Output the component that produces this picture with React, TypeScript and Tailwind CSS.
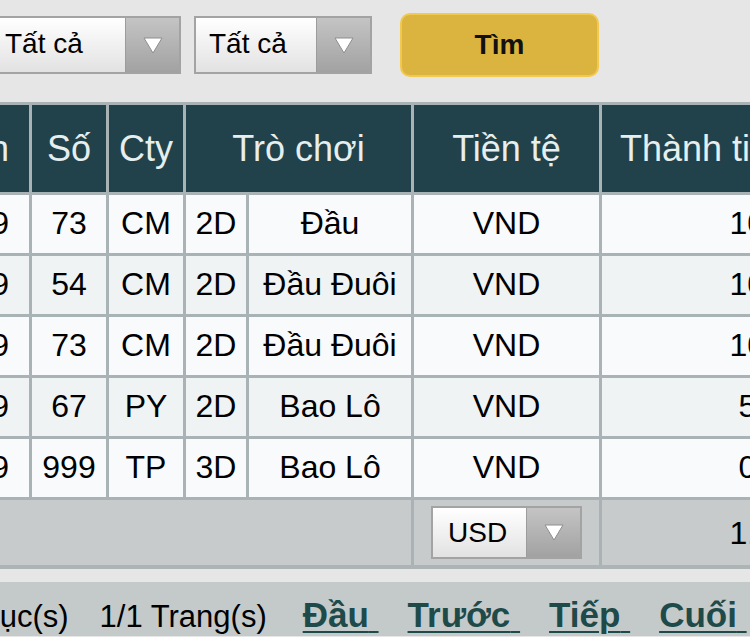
import React from "react";

const rows = [
  { date: "21/04/2019", num: "73", cty: "CM", kind: "2D", game: "Đầu", cur: "VND", amt: "10,000" },
  { date: "21/04/2019", num: "54", cty: "CM", kind: "2D", game: "Đầu Đuôi", cur: "VND", amt: "10,000" },
  { date: "21/04/2019", num: "73", cty: "CM", kind: "2D", game: "Đầu Đuôi", cur: "VND", amt: "10,000" },
  { date: "21/04/2019", num: "67", cty: "PY", kind: "2D", game: "Bao Lô", cur: "VND", amt: "5,000" },
  { date: "21/04/2019", num: "999", cty: "TP", kind: "3D", game: "Bao Lô", cur: "VND", amt: "0,000" },
];

function Arrow() {
  return (
    <svg width="20" height="17" viewBox="0 0 20 17">
      <polygon points="1,1 19,1 10,16" fill="#ffffff" stroke="#8e8e8e" strokeWidth="1" />
    </svg>
  );
}

function Select({ label, className, text }: { label: string; className: string; text: string }) {
  return (
    <div className={`flex shrink-0 border-2 border-[#a3a3a3] ${className}`}>
      <div className={`flex flex-1 items-center bg-gradient-to-b from-white to-[#e2e2e2] pl-[13px] text-black ${text}`}>
        {label}
      </div>
      <div className="flex w-[54px] items-center justify-center border-l border-[#9c9c9c] bg-gradient-to-b from-[#c4c4c4] to-[#a2a2a2]">
        <Arrow />
      </div>
    </div>
  );
}

const cell = "flex h-full shrink-0 items-center justify-center border-r-[3px] border-[#a9b2b4]";

export default function App() {
  return (
    <div className="h-[637px] w-[750px] overflow-hidden bg-[#e6e6e6] font-['Liberation_Sans',Arial,sans-serif]">
      {/* filters */}
      <div className="flex h-[102px] items-start pt-[13px]">
        <Select label="Tất cả" className="-ml-[10px] mt-[3px] h-[58px] w-[191px]" text="text-[28px] pb-[2px]" />
        <Select label="Tất cả" className="ml-[13px] mt-[3px] h-[58px] w-[178px]" text="text-[28px] pb-[2px]" />
        <button className="ml-[28px] h-[64px] w-[199px] rounded-[10px] border-2 border-[#f2c94f] bg-[#dbb33f] text-[28px] font-bold text-[#111]">
          Tìm
        </button>
      </div>

      {/* table */}
      <div className="-ml-[168px] w-max border-t-[3px] border-[#a9b2b4]">
        <div className="flex h-[90px] border-b-[3px] border-[#a9b2b4] bg-[#21424a] text-[36px] text-[#e6eeee]">
          <div className={`${cell} w-[200px] !justify-end pr-[20px]`}>Thời gian</div>
          <div className={`${cell} w-[77px]`}>Số</div>
          <div className={`${cell} w-[77px]`}>Cty</div>
          <div className={`${cell} w-[228px]`}>Trò chơi</div>
          <div className={`${cell} w-[188px]`}>Tiền tệ</div>
          <div className="flex h-full w-[353px] items-center pl-[18px]">Thành tiền</div>
        </div>

        {rows.map((r, i) => (
          <div
            key={i}
            className={`flex h-[61px] border-b-[3px] border-[#a9b2b4] text-[32px] text-black ${
              i % 2 === 0 ? "bg-[#f8fafc]" : "bg-[#eff3f4]"
            }`}
          >
            <div className={`${cell} w-[200px] !justify-end pr-[20px] pb-[3px]`}>{r.date}</div>
            <div className={`${cell} w-[77px] pb-[3px]`}>{r.num}</div>
            <div className={`${cell} w-[77px] pb-[3px]`}>{r.cty}</div>
            <div className={`${cell} w-[63px] pb-[3px]`}>{r.kind}</div>
            <div className={`${cell} w-[165px] pb-[3px]`}>{r.game}</div>
            <div className={`${cell} w-[188px] pb-[3px]`}>{r.cur}</div>
            <div className="flex h-full w-[353px] items-center justify-center pb-[3px]">{r.amt}</div>
          </div>
        ))}

        <div className="flex h-[69px] border-b-[4px] border-[#adb4b5] bg-[#c7cbcb] text-[32px] text-black">
          <div className={`${cell} w-[582px]`} />
          <div className={`${cell} w-[188px]`}>
            <Select label="USD" className="h-[53px] w-[151px]" text="text-[28px] !pl-[15px]" />
          </div>
          <div className="flex h-full w-[353px] items-center justify-center">1.7826</div>
        </div>
      </div>

      <div className="h-[13px]" />

      {/* pagination */}
      <div className="flex h-[54px] items-start bg-[#c4c9ca] pt-[14px] leading-[38px]">
        <div className="-ml-[52px] flex items-baseline whitespace-nowrap">
          <span className="text-[31px] text-black">5 Mục(s)</span>
          <span className="ml-[31px] text-[31px] text-black">1/1 Trang(s)</span>
          {["Đầu", "Trước", "Tiếp", "Cuối"].map((l, i) => (
            <a
              key={l}
              href="#"
              className={`${i === 0 ? "ml-[36px]" : "ml-[29px]"} text-[35px] font-bold text-[#1e4a4a] underline decoration-2 underline-offset-[4px]`}
            >
              {l}
              {"\u00a0"}
            </a>
          ))}
        </div>
      </div>
    </div>
  );
}
